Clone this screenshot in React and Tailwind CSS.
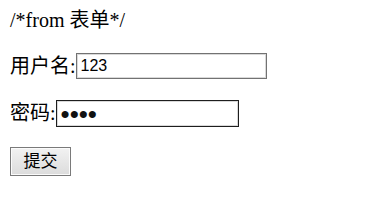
import React from 'react';

const serif = { fontFamily: '"Liberation Serif", "Noto Sans CJK SC", serif' };

export default function App() {
  return (
    <div className="min-h-[222px] w-[372px] bg-white pt-[9px] pl-[10px] text-[20px] text-black" style={serif}>
      <p className="leading-[23px]">/*from 表单*/</p>

      <div className="mt-[21px] flex h-[26px] items-center">
        <span className="leading-[23px]">用户名:</span>
        <input
          type="text"
          defaultValue="123"
          className="h-[26px] w-[191px] border border-[#727272] bg-white pl-[4px] text-[16px] text-black shadow-[inset_0_0_0_1px_#d9d9d9] outline-none"
          style={{ fontFamily: '"Liberation Sans", Arial, sans-serif' }}
        />
      </div>

      <div className="mt-[21px] flex h-[27px] items-center">
        <span className="leading-[23px]">密码:</span>
        <input
          type="password"
          defaultValue="1234"
          className="h-[27px] w-[183px] border border-[#1e1e1e] bg-white pl-[4px] pt-[1px] text-[26px] leading-none text-[#111] shadow-[inset_0_0_0_1px_#d9d9d9] outline-none"
          style={{ fontFamily: '"Liberation Sans", Arial, sans-serif' }}
        />
      </div>

      <button
        type="button"
        className="mt-[20px] flex h-[29px] w-[61px] items-center justify-center border border-[#7a7a7a] bg-gradient-to-b from-[#f2f2f2] to-[#dcdcdc] text-[17px] leading-none text-black shadow-[inset_0_0_0_1px_#fbfbfb]"
        style={serif}
      >
        提交
      </button>
    </div>
  );
}
